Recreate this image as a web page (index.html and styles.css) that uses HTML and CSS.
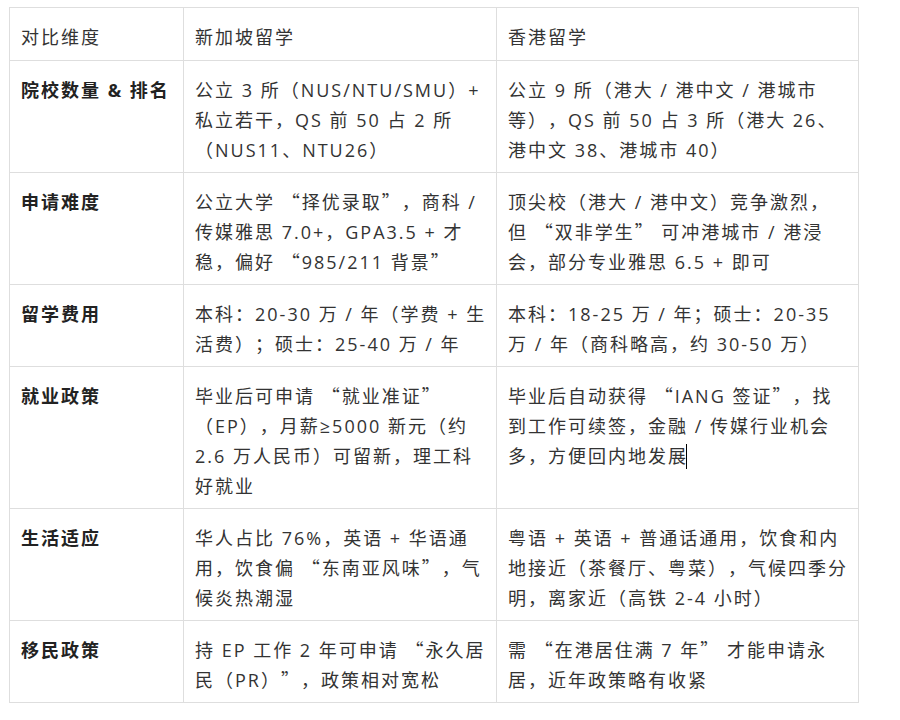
FILE: index.html
```html
<!DOCTYPE html>
<html lang="zh-CN">
<head>
<meta charset="utf-8">
<title>新加坡留学 vs 香港留学</title>
<link rel="stylesheet" href="styles.css">
</head>
<body>
<table class="compare">
  <colgroup>
    <col class="c1">
    <col class="c2">
    <col class="c3">
  </colgroup>
  <thead>
    <tr>
      <th>对比维度</th>
      <th>新加坡留学</th>
      <th>香港留学</th>
    </tr>
  </thead>
  <tbody>
    <tr>
      <td class="dim">院校数量 &amp; 排名</td>
      <td>公立 3 所（NUS/NTU/SMU）+<br>私立若干，QS 前 50 占 2 所<br>（NUS11、NTU26）</td>
      <td>公立 9 所（港大 / 港中文 / 港城市<br>等），QS 前 50 占 3 所（港大 26、<br>港中文 38、港城市 40）</td>
    </tr>
    <tr>
      <td class="dim">申请难度</td>
      <td>公立大学 <span class="cq">“</span>择优录取<span class="cq">”</span>，商科 /<br>传媒雅思 7.0+，GPA3.5 + 才<br>稳，偏好 <span class="cq">“</span>985/211 背景<span class="cq">”</span></td>
      <td>顶尖校（港大 / 港中文）竞争激烈，<br>但 <span class="cq">“</span>双非学生<span class="cq">”</span> 可冲港城市 / 港浸<br>会，部分专业雅思 6.5 + 即可</td>
    </tr>
    <tr>
      <td class="dim">留学费用</td>
      <td>本科：20-30 万 / 年（学费 + 生<br>活费）；硕士：25-40 万 / 年</td>
      <td>本科：18-25 万 / 年；硕士：20-35<br>万 / 年（商科略高，约 30-50 万）</td>
    </tr>
    <tr>
      <td class="dim">就业政策</td>
      <td>毕业后可申请 <span class="cq">“</span>就业准证<span class="cq">”</span><br>（EP），月薪≥5000 新元（约<br>2.6 万人民币）可留新，理工科<br>好就业</td>
      <td>毕业后自动获得 <span class="cq">“</span>IANG 签证<span class="cq">”</span>，找<br>到工作可续签，金融 / 传媒行业机会<br>多，方便回内地发展<span class="caret"></span></td>
    </tr>
    <tr>
      <td class="dim">生活适应</td>
      <td>华人占比 76%，英语 + 华语通<br>用，饮食偏 <span class="cq">“</span>东南亚风味<span class="cq">”</span>，气<br>候炎热潮湿</td>
      <td>粤语 + 英语 + 普通话通用，饮食和内<br>地接近（茶餐厅、粤菜），气候四季分<br>明，离家近（高铁 2-4 小时）</td>
    </tr>
    <tr>
      <td class="dim">移民政策</td>
      <td>持 EP 工作 2 年可申请 <span class="cq">“</span>永久居<br>民（PR）<span class="cq">”</span>，政策相对宽松</td>
      <td>需 <span class="cq">“</span>在港居住满 7 年<span class="cq">”</span> 才能申请永<br>居，近年政策略有收紧</td>
    </tr>
  </tbody>
</table>
</body>
</html>
```

FILE: styles.css
```css
html, body {
  margin: 0;
  padding: 0;
  background: #ffffff;
}

body {
  padding: 7px 0 0 9px;
  font-family: "Open Sans", "Noto Sans CJK SC", sans-serif;
  font-size: 18px;
  color: #333333;
}

.compare {
  border-collapse: collapse;
  table-layout: fixed;
  width: 850px;
}

.c1 { width: 174px; }
.c2 { width: 313px; }
.c3 { width: 362px; }

.compare th,
.compare td {
  border: 1px solid #dedede;
  padding: 14px 11px 7px 11px;
  line-height: 30px;
  text-align: left;
  vertical-align: top;
  font-weight: normal;
  letter-spacing: 2px;
  white-space: nowrap;
  text-spacing-trim: space-all;
}

.compare th {
  padding-bottom: 8px;
}

.compare td.dim {
  font-weight: bold;
  color: #222222;
}

.cq {
  font-family: "Noto Sans CJK SC", sans-serif;
  line-height: 1;
}

.caret {
  display: inline-block;
  width: 1px;
  height: 25px;
  background: #000000;
  vertical-align: -6px;
  margin-left: -2px;
}
```
